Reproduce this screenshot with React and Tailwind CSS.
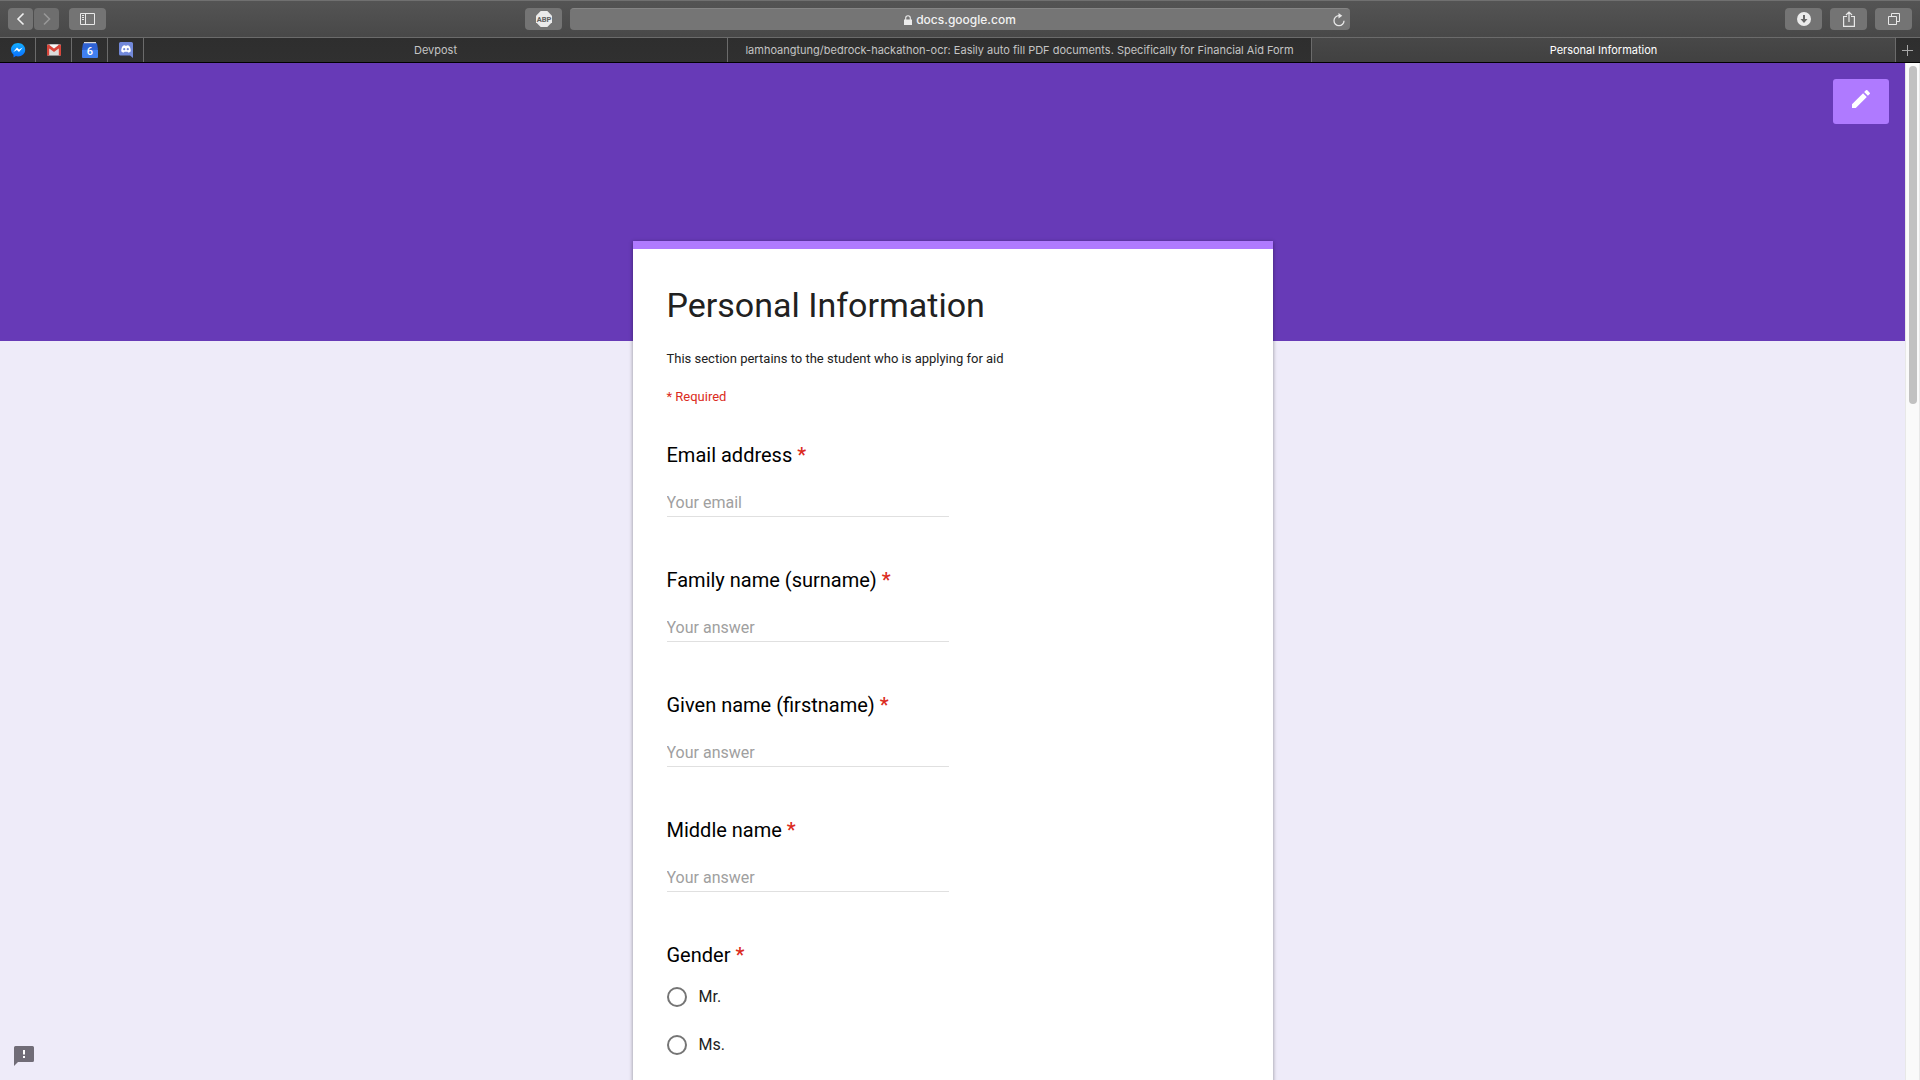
import React from "react";

const toolButton =
  "flex h-[22px] w-[37px] items-center justify-center rounded bg-[#747474] text-[#e8e8e8]";

const pinned = [
  { name: "Messenger", icon: <MessengerIcon /> },
  { name: "Gmail", icon: <GmailIcon /> },
  { name: "Calendar", icon: <CalendarIcon /> },
  { name: "Discord", icon: <DiscordIcon /> },
];

const tabs = [
  { title: "Devpost" },
  {
    title:
      "lamhoangtung/bedrock-hackathon-ocr: Easily auto fill PDF documents. Specifically for Financial Aid Form",
  },
  { title: "Personal Information", active: true },
];

const fields = [
  { id: "email", label: "Email address", placeholder: "Your email", type: "email" },
  { id: "family", label: "Family name (surname)", placeholder: "Your answer", type: "text" },
  { id: "given", label: "Given name (firstname)", placeholder: "Your answer", type: "text" },
  { id: "middle", label: "Middle name", placeholder: "Your answer", type: "text" },
];

function MessengerIcon() {
  return (
    <svg width="16" height="16" viewBox="0 0 16 16">
      <defs>
        <linearGradient id="msg" x1="0" y1="0" x2="0" y2="1">
          <stop offset="0" stopColor="#12b0ff" />
          <stop offset="1" stopColor="#0a6cff" />
        </linearGradient>
      </defs>
      <path d="M8 1C3.900 1 1 3.900 1 7.600c0 2.100 1 3.900 2.500 5.100V15.500l2.400-1.400c.7.200 1.400.3 2.100.3 4.100 0 7.200-2.900 7.200-6.700S12.100 1 8 1z" fill="url(#msg)" />
      <path d="M3.300 10 7 5.600l2.100 1.900 3.600-1.900L9 10 6.900 8.100z" fill="#fff" />
    </svg>
  );
}

function GmailIcon() {
  return (
    <svg width="14" height="12" viewBox="0 0 14 12">
      <rect x="0" y="0.500" width="14" height="11" rx="1" fill="#efefef" />
      <path d="M3 11V5l4 3 4-3v6z" fill="#dcdcdc" />
      <path d="M0 1.500V11.500h2.300V4.500L7 8l4.700-3.500v7H14V1.500L13 .5h-.8L7 4.600 1.800.5H1z" fill="#d8453a" />
      <path d="M2.300.5h9.400L7 4.300z" fill="#f7f7f7" />
    </svg>
  );
}

function CalendarIcon() {
  return (
    <svg width="16" height="16" viewBox="0 0 16 16">
      <path d="M2 0h12v3H2z" fill="#d9d9d9" />
      <path d="M1 1.500h14V8H1z" fill="#2a56c6" />
      <path d="M0 7.500h16V15a1 1 0 0 1-1 1H1a1 1 0 0 1-1-1z" fill="#4080f0" />
      <path d="M1 1.500h14l1 6H0z" fill="#2f62d4" />
      <text x="8" y="13" textAnchor="middle" fontSize="11" fontWeight="500" fontFamily="Roboto, sans-serif" fill="#fff">
        6
      </text>
    </svg>
  );
}

function DiscordIcon() {
  return (
    <svg width="14" height="16" viewBox="0 0 14 16">
      <path d="M1.600 0h10.800A1.600 1.600 0 0 1 14 1.600V16l-3-2.500H1.600A1.600 1.600 0 0 1 0 11.900V1.600A1.600 1.600 0 0 1 1.600 0z" fill="#7289da" />
      <path d="M4.400 3.500 6 3.200l.3.600h1.400l.3-.6 1.600.3c1.200.5 2.200 3.200 2.200 5.800-.7.900-1.600 1.300-2.600 1.300l-.7-.9H5.500l-.7.900c-1 0-1.900-.4-2.600-1.300 0-2.600 1-5.300 2.200-5.800z" fill="#fff" />
      <circle cx="5.200" cy="7.200" r="1.100" fill="#7289da" />
      <circle cx="8.800" cy="7.200" r="1.100" fill="#7289da" />
    </svg>
  );
}

function Toolbar() {
  return (
    <div className="grid h-[37px] grid-cols-[1fr_auto_1fr] items-center border-t border-[#707070] bg-linear-to-b from-[#545454] to-[#484848]">
      <div className="flex items-center justify-between pr-2 pl-2">
        <div className="flex gap-[10px]">
          <div className="flex gap-px">
            <button aria-label="Back" className="flex h-[22px] w-[25px] items-center justify-center rounded bg-[#747474]">
              <svg width="10" height="14" viewBox="0 0 10 14" fill="none" stroke="#f0f0f0" strokeWidth="1.600">
                <path d="M7.500 1.500 2 7l5.500 5.500" />
              </svg>
            </button>
            <button aria-label="Forward" className="flex h-[22px] w-[25px] items-center justify-center rounded bg-[#6e6e6e]">
              <svg width="10" height="14" viewBox="0 0 10 14" fill="none" stroke="#979797" strokeWidth="1.600">
                <path d="M2 1.500 7.500 7 2 12.500" />
              </svg>
            </button>
          </div>
          <button aria-label="Show sidebar" className={toolButton}>
            <svg width="15" height="12" viewBox="0 0 15 12" fill="none" stroke="currentColor">
              <path d="M.5.5h14v11H.5zM5.500.5v11M2 2.500h2M2 4.500h2M2 6.500h2" />
            </svg>
          </button>
        </div>
        <button aria-label="Adblock Plus" className={toolButton}>
          <svg width="16" height="16" viewBox="0 0 16 16">
            <path d="M4.700 0h6.600L16 4.700v6.600L11.300 16H4.700L0 11.300V4.700z" fill="#ebebeb" />
            <text x="8" y="10.500" textAnchor="middle" fontSize="7.500" fontWeight="700" fontFamily="Roboto, sans-serif" fill="#606060">
              ABP
            </text>
          </svg>
        </button>
      </div>
      <div className="flex h-[22px] w-[780px] items-center rounded border-t border-[#858585] bg-[#757575] px-[5px] text-[#f2f2f2]">
        <span className="w-3" />
        <a href="https://docs.google.com" className="flex flex-1 items-center justify-center gap-1 text-[12px] leading-5 font-medium">
          <svg width="8" height="10" viewBox="0 0 8 10">
            <path d="M0 4.500h8V10H0z" fill="#ececec" />
            <path d="M1.700 5V3a2.300 2.300 0 0 1 4.600 0v2" fill="none" stroke="#ececec" strokeWidth="1.100" />
          </svg>
          docs.google.com
        </a>
        <button aria-label="Reload">
          <svg width="12" height="14" viewBox="0 0 12 14">
            <path d="M6 2.700A5 5 0 1 0 11 7.700" fill="none" stroke="#e8e8e8" strokeWidth="1.300" />
            <path d="M5.500 0 9.300 2.700 5.500 5.500z" fill="#e8e8e8" />
          </svg>
        </button>
      </div>
      <div className="flex justify-end gap-2 pr-2">
        <button aria-label="Downloads" className={toolButton}>
          <svg width="14" height="14" viewBox="0 0 14 14">
            <circle cx="7" cy="7" r="7" fill="#ebebeb" />
            <path d="M6 3h2v4h2.500L7 11 3.500 7H6z" fill="#666" />
          </svg>
        </button>
        <button aria-label="Share" className={toolButton}>
          <svg width="12" height="16" viewBox="0 0 12 16" fill="none" stroke="currentColor" strokeWidth="1.200">
            <path d="M4 5.500H.6v9.900h10.800V5.500H8M6 11V1M3 4l3-3 3 3" />
          </svg>
        </button>
        <button aria-label="Show all tabs" className={toolButton}>
          <svg width="12" height="12" viewBox="0 0 12 12" fill="none" stroke="currentColor">
            <path d="M.5 3.500h8v8h-8zM3.500 3.500v-3h8v8h-3" />
          </svg>
        </button>
      </div>
    </div>
  );
}

function TabBar() {
  return (
    <div className="flex h-[26px] border-t border-b border-t-[#6b6b6b] border-b-black bg-linear-to-b from-[#2e2e2e] to-[#303030] text-[11px] text-[#c4c4c4]">
      {pinned.map((p) => (
        <button key={p.name} aria-label={p.name} className="flex w-9 items-center justify-center border-r border-[#6b6b6b]">
          {p.icon}
        </button>
      ))}
      {tabs.map((t) => (
        <button
          key={t.title}
          className={
            t.active
              ? "min-w-0 flex-1 truncate border-r border-[#6b6b6b] bg-linear-to-b from-[#484848] to-[#414141] px-2 text-white"
              : "min-w-0 flex-1 truncate border-r border-[#6b6b6b] px-2"
          }
        >
          {t.title}
        </button>
      ))}
      <button aria-label="New tab" className="flex w-6 items-center justify-center pr-px">
        <svg width="11" height="11" viewBox="0 0 11 11" stroke="#a8a8a8">
          <path d="M5.500 0v11M0 5.500h11" />
        </svg>
      </button>
    </div>
  );
}

function Required() {
  return <span className="font-medium text-[#db2b21]"> *</span>;
}

function FormCard() {
  return (
    <form className="mx-auto -mt-[100px] w-full max-w-[640px] border-t-8 border-[#af7aff] bg-white px-[34px] pt-[33px] pb-16 shadow-[0_1px_4px_rgba(0,0,0,0.4)]">
      <h1 className="text-[34px] leading-[46px] text-[#212121]">Personal Information</h1>
      <p className="mt-[21px] text-[13px] leading-5 text-[#212121]">
        This section pertains to the student who is applying for aid
      </p>
      <p className="mt-[18px] text-[13px] leading-5 text-[#db2b21]">* Required</p>
      <div className="mt-9 flex flex-col gap-[51px]">
        {fields.map((f) => (
          <div key={f.id} className="flex flex-col items-start">
            <label htmlFor={f.id} className="text-[20px] leading-6 text-black">
              {f.label}
              <Required />
            </label>
            <input
              id={f.id}
              type={f.type}
              placeholder={f.placeholder}
              className="mt-[23px] h-[27px] w-[282px] border-b border-[#e0e0e0] bg-transparent pb-[2px] text-[16px] leading-6 outline-none placeholder:text-[#a0a0a0]"
            />
          </div>
        ))}
        <fieldset>
          <legend className="text-[20px] leading-6 text-black">
            Gender
            <Required />
          </legend>
          <div className="mt-5 flex flex-col gap-7">
            {["Mr.", "Ms."].map((g) => (
              <label key={g} className="flex h-5 items-center gap-3 text-[16px] leading-5 text-[#212121]">
                <input
                  type="radio"
                  name="gender"
                  className="size-5 appearance-none rounded-full border-2 border-[#757575] checked:bg-[#673ab7]"
                />
                {g}
              </label>
            ))}
          </div>
        </fieldset>
      </div>
    </form>
  );
}

export default function App() {
  return (
    <div className="flex h-screen flex-col overflow-hidden bg-[#eeebf9] font-[Roboto,sans-serif]">
      <header className="shrink-0 font-[Inter,sans-serif]">
        <Toolbar />
        <TabBar />
      </header>
      <div className="relative flex min-h-0 flex-1">
        <main className="min-w-0 flex-1 overflow-hidden">
          <div className="flex h-[278px] items-start justify-end bg-[#673ab7] p-4">
            <button aria-label="Edit this form" className="flex h-[45px] w-14 items-center justify-center rounded-[3px] bg-[#af7aff] pb-[6px]">
              <svg width="24" height="24" viewBox="0 0 24 24" fill="#fff">
                <path d="M3 17.250V21h3.750L17.810 9.940l-3.750-3.750L3 17.250zM20.710 7.040a1 1 0 0 0 0-1.410l-2.340-2.340a1 1 0 0 0-1.410 0l-1.830 1.830 3.750 3.750 1.830-1.830z" />
              </svg>
            </button>
          </div>
          <FormCard />
        </main>
        <div className="w-[15px] border-x border-[#e8e8e8] bg-[#fafafa] px-[3px] pt-[3px]">
          <div className="h-[338px] w-2 rounded-full bg-[#c1c1c1]" />
        </div>
        <button aria-label="Report a problem" className="absolute bottom-[14px] left-[14px]">
          <svg width="20" height="20" viewBox="0 0 20 20">
            <path d="M1.500 0h17A1.500 1.500 0 0 1 20 1.500v13a1.500 1.500 0 0 1-1.500 1.500H4l-4 4V1.500A1.500 1.500 0 0 1 1.500 0z" fill="#706c77" />
            <path d="M9 4h2v4.500H9zM9 10h2v2H9z" fill="#fff" />
          </svg>
        </button>
      </div>
    </div>
  );
}
